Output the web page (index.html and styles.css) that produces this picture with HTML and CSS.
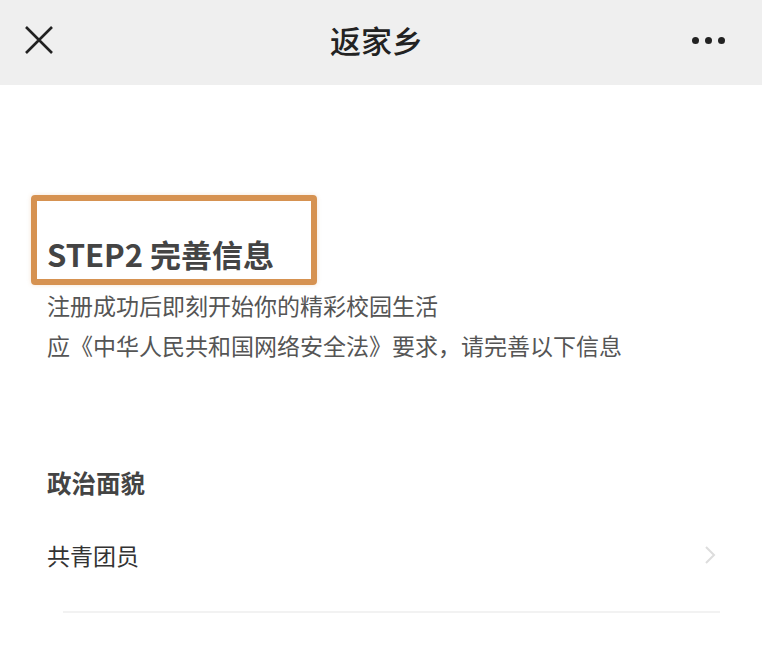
FILE: index.html
```html
<!DOCTYPE html>
<html lang="zh-CN">
<head>
    <meta charset="UTF-8">
    <meta name="viewport" content="width=device-width, initial-scale=1.0">
    <title>返家乡</title>
    <link rel="stylesheet" href="styles.css">
</head>
<body>
    <div class="nav-bar">
        <button class="nav-btn close-btn" aria-label="关闭">
            <svg width="30" height="30" viewBox="0 0 30 30">
                <path d="M2 2 L28 28 M28 2 L2 28" stroke="#222" stroke-width="2.6" fill="none"/>
            </svg>
        </button>
        <div class="nav-title">返家乡</div>
        <button class="nav-btn more-btn" aria-label="更多">
            <span class="dot"></span><span class="dot"></span><span class="dot"></span>
        </button>
    </div>

    <div class="content">
        <div class="step-box">
            <h1 class="step-title">STEP2 完善信息</h1>
        </div>
        <p class="step-desc">注册成功后即刻开始你的精彩校园生活</p>
        <p class="step-desc">应《中华人民共和国网络安全法》要求，请完善以下信息</p>

        <div class="field-label">政治面貌</div>
        <div class="field-row">
            <span class="field-value">共青团员</span>
            <svg class="chevron" width="12" height="20" viewBox="0 0 12 20">
                <path d="M2 2 L10 10 L2 18" stroke="#ddd" stroke-width="2" fill="none"/>
            </svg>
        </div>
        <div class="divider"></div>
    </div>
</body>
</html>
```

FILE: styles.css
```css
body {
    margin: 0;
    background-color: #fff;
    font-family: 'Noto Sans CJK SC', 'Noto Sans', sans-serif;
    color: #333;
}

.nav-bar {
    height: 85px;
    background-color: #efefef;
    display: flex;
    align-items: center;
    justify-content: space-between;
    padding: 0 24px 0 24px;
    box-sizing: border-box;
}

.nav-btn {
    border: none;
    background: none;
    padding: 0;
    width: 40px;
    height: 40px;
    display: flex;
    align-items: center;
    cursor: pointer;
    margin-top: -5px;
}

.close-btn svg {
    display: block;
}

.more-btn {
    justify-content: flex-end;
    gap: 6px;
    width: 40px;
    margin-right: 13px;
}

.dot {
    width: 7px;
    height: 7px;
    border-radius: 50%;
    background-color: #222;
}

.nav-title {
    font-size: 31px;
    font-weight: 500;
    color: #222;
    margin-top: -6px;
    margin-left: 4px;
}

.content {
    padding: 110px 42px 0 31px;
}

.step-box {
    width: 286px;
    height: 90px;
    box-sizing: border-box;
    border: 6px solid #d69251;
    border-radius: 4px;
    padding: 35px 0 0 10px;
    box-shadow: 0 0 4px rgba(214, 146, 81, 0.25);
}

.step-title {
    margin: 0;
    font-size: 31px;
    line-height: 36px;
    font-weight: 700;
    color: #444;
    white-space: nowrap;
}

.step-desc {
    margin: 0;
    padding-left: 16px;
    font-size: 23px;
    line-height: 40px;
    color: #555;
}

.field-label {
    margin-top: 98px;
    padding-left: 16px;
    font-size: 24.5px;
    line-height: 40px;
    font-weight: 700;
    color: #444;
}

.field-row {
    margin-top: 32px;
    padding-left: 16px;
    display: flex;
    align-items: center;
    justify-content: space-between;
    height: 40px;
}

.field-value {
    font-size: 23px;
    color: #333;
}

.chevron {
    margin-right: 4px;
}

.divider {
    margin-top: 36px;
    margin-left: 32px;
    height: 2px;
    background-color: #f2f2f2;
}
```
